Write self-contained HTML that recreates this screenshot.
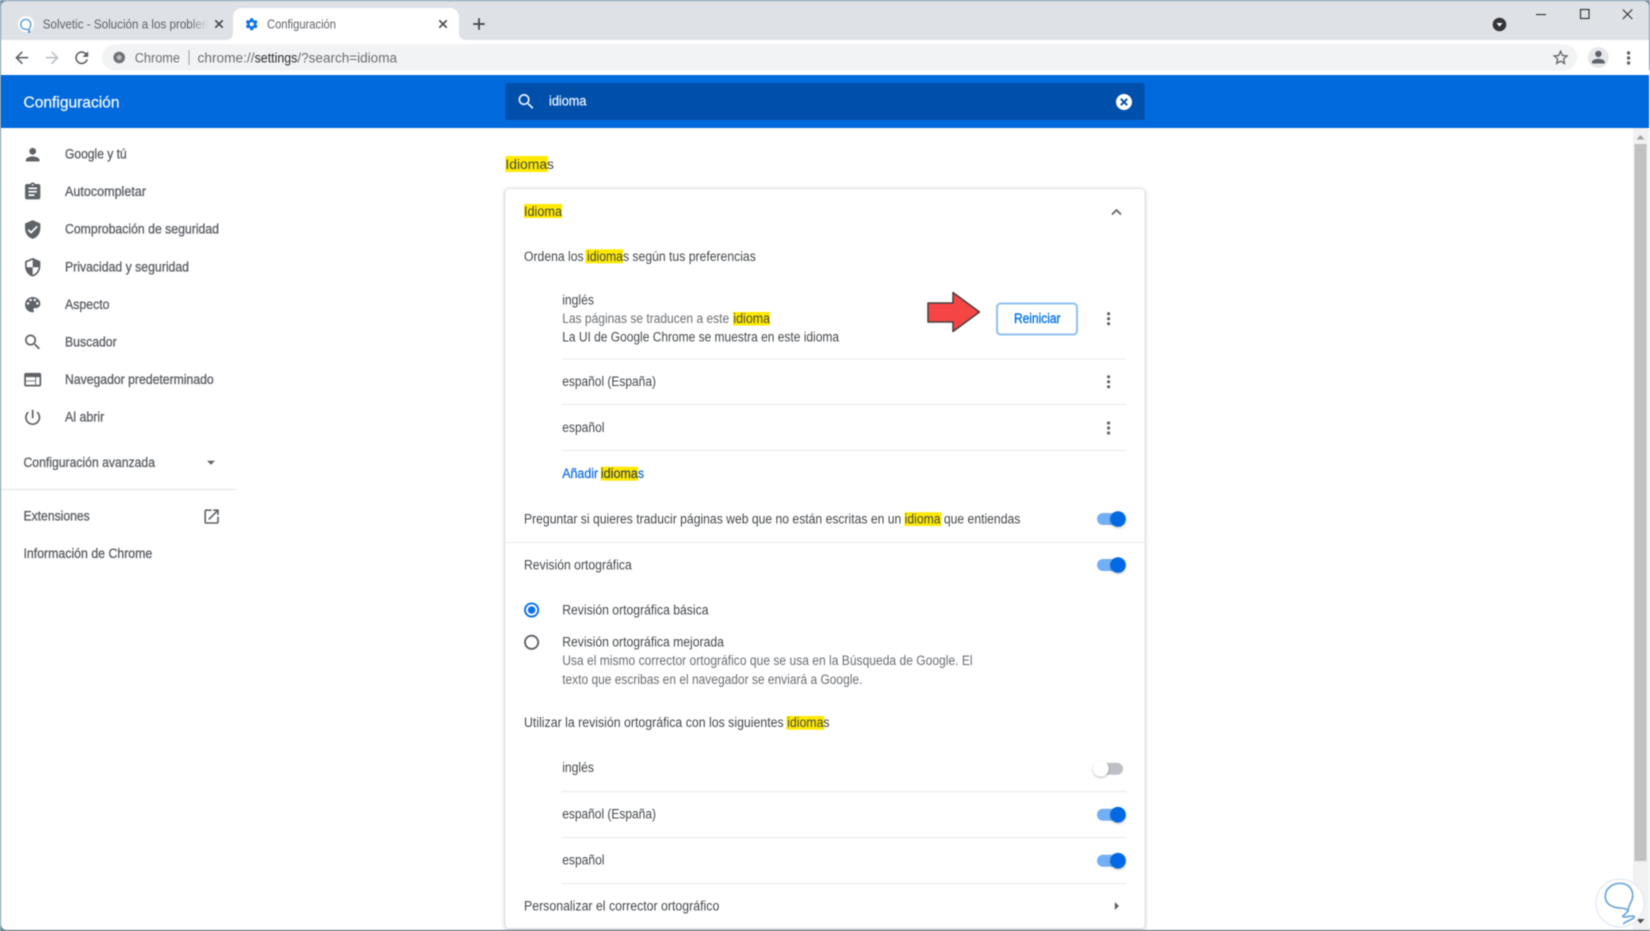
<!DOCTYPE html>
<html lang="es">
<head>
<meta charset="utf-8">
<title>Configuración</title>
<style>
html,body{margin:0;padding:0;background:#fff;width:1650px;height:931px;overflow:hidden}
svg{display:block;filter:blur(.42px)}
text{font-family:"Liberation Sans",sans-serif;font-size:13.5px;fill:#3c4043;white-space:pre}
.s{fill:#5f6368;stroke:#5f6368;stroke-width:.35px}
.g{fill:#6b6f74}
.d{fill:#45494d}
.tb{font-size:12.5px;fill:#5f6368}
.u{font-size:13.5px;fill:#6b6f74}
.i{fill:#5f6368}
.y{fill:#ffe900}
.ln{fill:#e8e9eb}
.tr{fill:#72b0f5}
.kn{fill:#0069e3}
</style>
</head>
<body>
<svg width="1650" height="931" viewBox="0 0 1650 931" xmlns="http://www.w3.org/2000/svg">
<defs>
<linearGradient id="fade" x1="0" x2="1" y1="0" y2="0"><stop offset="0" stop-color="#dee1e6" stop-opacity="0"/><stop offset="1" stop-color="#dee1e6"/></linearGradient>
<filter id="sh" x="-50%" y="-50%" width="200%" height="200%"><feDropShadow dx="0" dy="1" stdDeviation="1" flood-color="#000" flood-opacity=".3"/></filter>
<filter id="cs" x="-5%" y="-5%" width="110%" height="110%"><feDropShadow dx="0" dy="1" stdDeviation="1.5" flood-color="#3c4043" flood-opacity=".3"/></filter>
</defs>

<!-- window frame -->
<rect width="1650" height="931" fill="#6f93a8"/>
<rect x="1648" y="70" width="2" height="861" fill="#f2f4f5"/>
<rect x="1" y="1" width="1648" height="929" rx="6" fill="#fff"/>
<path d="M1 40V7a6 6 0 0 1 6-6h1636a6 6 0 0 1 6 6v33z" fill="#dee1e6"/>
<rect y="930" width="1650" height="1" fill="#3e5a70"/>

<!-- tabs -->
<path d="M225 40c6 0 8-3 8-8V17c0-5 4-9 9-9h208c5 0 9 4 9 9v15c0 5 2 8 8 8z" fill="#fff"/>
<circle cx="26" cy="24" r="8" fill="#fff"/>
<path d="M29 31c-.6-1.600-1.400-1.800-3.200-1.800-3 0-5-1.800-5-4.600 0-3 2.200-5.200 5-5.200 2.900 0 5 2.200 5 5 0 2.400-1.800 3.300-1.800 6.600z" fill="none" stroke="#5b9bd5" stroke-width="1.400"/>
<circle cx="29.200" cy="32" r="1" fill="#2f7fd0"/>
<text x="42.800" y="28.500" class="tb" textLength="181" lengthAdjust="spacingAndGlyphs">Solvetic - Solución a los problemas</text>
<rect x="190" y="12" width="18" height="24" fill="url(#fade)"/>
<rect x="208" y="12" width="20" height="24" fill="#dee1e6"/>
<path d="M215.300 20.300l7.400 7.400m0-7.400l-7.400 7.400" stroke="#45494d" stroke-width="1.700" fill="none"/>
<g transform="translate(244.500 17) scale(.6)"><path fill="#0b72e6" d="M19.430 12.980c.04-.32.07-.64.07-.98s-.03-.66-.07-.98l2.110-1.650c.19-.15.24-.42.12-.64l-2-3.460c-.12-.22-.39-.3-.61-.22l-2.490 1c-.52-.4-1.080-.73-1.690-.98l-.38-2.650C14.460 2.180 14.250 2 14 2h-4c-.25 0-.46.18-.49.42l-.38 2.650c-.61.25-1.170.59-1.690.98l-2.490-1c-.23-.09-.49 0-.61.22l-2 3.460c-.13.22-.07.49.12.64l2.110 1.650c-.04.32-.07.65-.07.98s.03.66.07.98l-2.110 1.650c-.19.15-.24.42-.12.64l2 3.460c.12.22.39.3.61.22l2.490-1c.52.4 1.080.73 1.690.98l.38 2.650c.03.24.24.42.49.42h4c.25 0 .46-.18.49-.42l.38-2.650c.61-.25 1.170-.59 1.690-.98l2.490 1c.23.09.49 0 .61-.22l2-3.460c.12-.22.07-.49-.12-.64l-2.110-1.650zM12 15.500c-1.930 0-3.500-1.570-3.500-3.500s1.570-3.500 3.500-3.500 3.500 1.570 3.500 3.500-1.570 3.500-3.500 3.500z"/></g>
<text x="267" y="28.500" class="tb" textLength="69" lengthAdjust="spacingAndGlyphs">Configuración</text>
<path d="M439.300 20.300l7.400 7.400m0-7.400l-7.400 7.400" stroke="#45494d" stroke-width="1.700" fill="none"/>
<path d="M479 18.200v11.600M473.200 24h11.600" stroke="#3c4043" stroke-width="1.700" fill="none"/>

<!-- window controls -->
<circle cx="1499.500" cy="24.500" r="6.800" fill="#35363a"/>
<path d="M1496.500 23h6l-3 3.600z" fill="#fff"/>
<rect x="1536" y="14" width="10" height="1.100" fill="#2b2b2b"/>
<rect x="1580.500" y="9.500" width="8.500" height="9" fill="none" stroke="#2b2b2b" stroke-width="1.100"/>
<path d="M1622.800 9.500l9.500 9.500m0-9.500l-9.500 9.500" stroke="#2b2b2b" stroke-width="1.050" fill="none"/>

<!-- toolbar -->
<rect x="1" y="40" width="1648" height="35" fill="#fff"/>
<g transform="translate(12 48) scale(.81)"><path fill="#5f6368" d="M20 11H7.830l5.590-5.590L12 4l-8 8 8 8 1.410-1.410L7.830 13H20v-2z"/></g>
<g transform="translate(42.500 48) scale(.81)"><path fill="#bdc1c6" d="M4 11h12.170l-5.590-5.590L12 4l8 8-8 8-1.410-1.410L16.170 13H4v-2z"/></g>
<g transform="translate(72 48) scale(.81)"><path fill="#5f6368" d="M17.650 6.350C16.200 4.900 14.350 4 12 4c-4.420 0-7.990 3.580-7.990 8s3.570 8 7.990 8c3.730 0 6.840-2.550 7.730-6h-2.080c-.82 2.330-3.040 4-5.650 4-3.310 0-6-2.690-6-6s2.690-6 6-6c1.660 0 3.140.69 4.220 1.780L13 11h7V4l-2.350 2.350z"/></g>
<rect x="102" y="44.300" width="1475" height="26.200" rx="13.100" fill="#f1f3f4"/>
<circle cx="119.200" cy="57.500" r="5.800" fill="#6f7378"/>
<circle cx="119.200" cy="57.500" r="2.500" fill="#b9bcc0"/>
<text x="134.700" y="62.300" class="u" textLength="45.300" lengthAdjust="spacingAndGlyphs">Chrome</text>
<rect x="188.500" y="50" width="1" height="15" fill="#9aa0a6"/>
<text x="197.500" y="62.300" class="u" textLength="57" lengthAdjust="spacingAndGlyphs">chrome://</text>
<text x="254.600" y="62.300" class="u" style="fill:#2a2c2f" textLength="42.800" lengthAdjust="spacingAndGlyphs">settings</text>
<text x="297.400" y="62.300" class="u" textLength="99.600" lengthAdjust="spacingAndGlyphs">/?search=idioma</text>
<g transform="translate(1551 48) scale(.8)"><path fill="#5f6368" d="M22 9.240l-7.190-.62L12 2 9.190 8.630 2 9.240l5.460 4.730L5.820 21 12 17.270 18.180 21l-1.630-7.030L22 9.240zM12 15.400l-3.760 2.270 1-4.280-3.320-2.880 4.380-.38L12 6.100l1.710 4.040 4.380.38-3.320 2.880 1 4.280L12 15.400z"/></g>
<circle cx="1598.300" cy="57.500" r="10.500" fill="#e6e8eb"/>
<g transform="translate(1588.800 47.500) scale(.8)"><path fill="#5f6368" d="M12 12c2.210 0 4-1.790 4-4s-1.790-4-4-4-4 1.790-4 4 1.790 4 4 4zm0 2c-2.670 0-8 1.340-8 4v2h16v-2c0-2.660-5.330-4-8-4z"/></g>
<circle cx="1628.600" cy="53" r="1.700" fill="#5f6368"/><circle cx="1628.600" cy="58" r="1.700" fill="#5f6368"/><circle cx="1628.600" cy="63" r="1.700" fill="#5f6368"/>

<!-- blue header -->
<rect x="1" y="75" width="1648" height="53" fill="#0069dc"/>
<text x="23.500" y="107.600" style="font-size:15.500px;fill:#f0f6fe;stroke:#f0f6fe;stroke-width:.25px" textLength="96" lengthAdjust="spacingAndGlyphs">Configuración</text>
<rect x="505.500" y="83" width="639" height="37" rx="2" fill="#0050ab"/>
<g transform="translate(516 91.500) scale(.85)"><path fill="#e8f0fe" d="M15.500 14h-.79l-.28-.27C15.410 12.590 16 11.110 16 9.500 16 5.910 13.090 3 9.500 3S3 5.910 3 9.500 5.910 16 9.500 16c1.610 0 3.090-.59 4.230-1.570l.27.28v.79l5 4.990L20.490 19l-4.990-5zm-6 0C7.010 14 5 11.990 5 9.500S7.010 5 9.500 5 14 7.010 14 9.500 11.990 14 9.500 14z"/></g>
<text x="549" y="105.600" style="fill:#f0f6fe;stroke:#f0f6fe;stroke-width:.2px" textLength="37.500" lengthAdjust="spacingAndGlyphs">idioma</text>
<circle cx="1124" cy="102" r="8" fill="#fff"/>
<path d="M1120.800 98.800l6.400 6.400m0-6.400l-6.400 6.400" stroke="#0050ab" stroke-width="1.900" fill="none"/>

<!-- sidebar -->
<g transform="translate(22.500 144.500) scale(.85)"><path class="i" d="M12 12c2.210 0 4-1.790 4-4s-1.790-4-4-4-4 1.790-4 4 1.790 4 4 4zm0 2c-2.670 0-8 1.340-8 4v2h16v-2c0-2.660-5.330-4-8-4z"/></g>
<text x="65" y="158.300" class="s" textLength="61.700" lengthAdjust="spacingAndGlyphs">Google y tú</text>
<g transform="translate(22.500 181.500) scale(.85)"><path class="i" d="M19 3h-4.180C14.400 1.840 13.300 1 12 1c-1.300 0-2.400.84-2.820 2H5c-1.100 0-2 .9-2 2v14c0 1.100.9 2 2 2h14c1.100 0 2-.9 2-2V5c0-1.100-.9-2-2-2zm-7 0c.55 0 1 .45 1 1s-.45 1-1 1-1-.45-1-1 .45-1 1-1zm2 14H7v-2h7v2zm3-4H7v-2h10v2zm0-4H7V7h10v2z"/></g>
<text x="65" y="196" class="s" textLength="81" lengthAdjust="spacingAndGlyphs">Autocompletar</text>
<g transform="translate(22.500 219.300) scale(.85)"><path class="i" d="M12 1L3 5v6c0 5.550 3.840 10.740 9 12 5.160-1.260 9-6.450 9-12V5l-9-4zm-2 16l-4-4 1.410-1.410L10 14.170l6.590-6.590L18 9l-8 8z"/></g>
<text x="65" y="233.500" class="s" textLength="154" lengthAdjust="spacingAndGlyphs">Comprobación de seguridad</text>
<g transform="translate(22.500 257) scale(.85)"><path class="i" d="M12 1L3 5v6c0 5.550 3.840 10.740 9 12 5.160-1.260 9-6.450 9-12V5l-9-4zm0 10.990h7c-.53 4.120-3.280 7.790-7 8.940V12H5V6.300l7-3.110v8.800z"/></g>
<text x="65" y="271.300" class="s" textLength="124" lengthAdjust="spacingAndGlyphs">Privacidad y seguridad</text>
<g transform="translate(22.500 294.500) scale(.85)"><path class="i" d="M12 3c-4.970 0-9 4.030-9 9s4.030 9 9 9c.83 0 1.500-.67 1.500-1.500 0-.39-.15-.74-.39-1.010-.23-.26-.38-.61-.38-.99 0-.83.67-1.500 1.500-1.500H16c2.760 0 5-2.240 5-5 0-4.420-4.030-8-9-8zm-5.500 9c-.83 0-1.500-.67-1.500-1.500S5.670 9 6.500 9 8 9.670 8 10.500 7.330 12 6.500 12zm3-4C8.670 8 8 7.330 8 6.500S8.670 5 9.500 5s1.500.67 1.500 1.500S10.330 8 9.500 8zm5 0c-.83 0-1.500-.67-1.500-1.500S13.670 5 14.500 5s1.500.67 1.500 1.500S15.330 8 14.500 8zm3 4c-.83 0-1.500-.67-1.500-1.500S16.670 9 17.500 9s1.500.67 1.500 1.500-.67 1.500-1.500 1.500z"/></g>
<text x="65" y="309" class="s" textLength="44.500" lengthAdjust="spacingAndGlyphs">Aspecto</text>
<g transform="translate(22.500 332) scale(.85)"><path class="i" d="M15.500 14h-.79l-.28-.27C15.410 12.590 16 11.110 16 9.500 16 5.910 13.090 3 9.500 3S3 5.910 3 9.500 5.910 16 9.500 16c1.610 0 3.090-.59 4.230-1.570l.27.28v.79l5 4.990L20.490 19l-4.990-5zm-6 0C7.010 14 5 11.990 5 9.500S7.010 5 9.500 5 14 7.010 14 9.500 11.990 14 9.500 14z"/></g>
<text x="65" y="346.500" class="s" textLength="51.700" lengthAdjust="spacingAndGlyphs">Buscador</text>
<g transform="translate(22.500 369.500) scale(.85)"><path class="i" d="M20 4H4c-1.100 0-1.990.9-1.990 2L2 18c0 1.100.9 2 2 2h16c1.100 0 2-.9 2-2V6c0-1.100-.9-2-2-2zm-5 14H4v-4h11v4zm0-5H4V9h11v4zm5 5h-4V9h4v9z"/></g>
<text x="65" y="384.200" class="s" textLength="148.700" lengthAdjust="spacingAndGlyphs">Navegador predeterminado</text>
<g transform="translate(22.500 407.200) scale(.85)"><path class="i" d="M13 3h-2v10h2V3zm4.830 2.170l-1.420 1.420C17.990 7.860 19 9.810 19 12c0 3.870-3.130 7-7 7s-7-3.130-7-7c0-2.190 1.010-4.140 2.580-5.420L6.170 5.170C4.230 6.820 3 9.260 3 12c0 4.970 4.030 9 9 9s9-4.030 9-9c0-2.740-1.230-5.180-3.170-6.830z"/></g>
<text x="65" y="421.700" class="s" textLength="39.300" lengthAdjust="spacingAndGlyphs">Al abrir</text>
<text x="23.500" y="467.200" class="s" textLength="131.500" lengthAdjust="spacingAndGlyphs">Configuración avanzada</text>
<path d="M207 460.800h8l-4 4z" fill="#5f6368"/>
<rect x="1" y="489" width="235" height="1" fill="#e0e2e4"/>
<text x="23.500" y="520.500" class="s" textLength="66.200" lengthAdjust="spacingAndGlyphs">Extensiones</text>
<g transform="translate(202 507) scale(.8)"><path class="i" d="M19 19H5V5h7V3H5c-1.110 0-2 .9-2 2v14c0 1.100.89 2 2 2h14c1.100 0 2-.9 2-2v-7h-2v7zM14 3v2h3.590l-9.830 9.830 1.410 1.410L19 6.410V10h2V3h-7z"/></g>
<text x="23.500" y="558.200" class="s" textLength="128.800" lengthAdjust="spacingAndGlyphs">Información de Chrome</text>

<!-- section title -->
<rect x="505.400" y="156" width="42.600" height="16" class="y"/>
<text x="505.400" y="168.800" class="d" textLength="48.600" lengthAdjust="spacingAndGlyphs">Idiomas</text>

<!-- card -->
<rect x="505" y="188.500" width="640" height="740" rx="4" fill="#fff" stroke="#e2e3e5" filter="url(#cs)"/>
<rect x="524" y="204" width="38" height="14" class="y"/>
<text x="524" y="216" class="d" textLength="38" lengthAdjust="spacingAndGlyphs">Idioma</text>
<path d="M1112 214.500l4.500-4.500 4.500 4.500" stroke="#5f6368" stroke-width="1.700" fill="none"/>

<rect x="585.400" y="249.300" width="37.600" height="14" class="y"/>
<text x="524" y="261" class="d" textLength="231.800" lengthAdjust="spacingAndGlyphs">Ordena los idiomas según tus preferencias</text>

<text x="562.200" y="304.300" class="d" textLength="31.800" lengthAdjust="spacingAndGlyphs">inglés</text>
<rect x="733" y="312" width="37" height="13.500" class="y"/>
<text x="562.200" y="323" class="g" textLength="167" lengthAdjust="spacingAndGlyphs">Las páginas se traducen a este</text>
<text x="733.400" y="323" class="d" textLength="36.600" lengthAdjust="spacingAndGlyphs">idioma</text>
<text x="562.200" y="341.600" class="d" textLength="276.800" lengthAdjust="spacingAndGlyphs">La UI de Google Chrome se muestra en este idioma</text>
<rect x="562" y="358.500" width="564" height="1" class="ln"/>

<path d="M928 303h25v-10.500l26.500 19.500-26.500 19.500V322h-25z" fill="#f64545" stroke="#45403f" stroke-width="1.500" stroke-linejoin="round"/>

<rect x="997" y="303.500" width="80" height="31" rx="3.500" fill="#fff" stroke="#8fc0f5" stroke-width="2"/>
<text x="1014" y="323.200" style="fill:#0b78e6;stroke:#0b78e6;stroke-width:.4px" textLength="46.500" lengthAdjust="spacingAndGlyphs">Reiniciar</text>

<g fill="#5f6368">
<circle cx="1108.600" cy="313.700" r="1.600"/><circle cx="1108.600" cy="318.700" r="1.600"/><circle cx="1108.600" cy="323.700" r="1.600"/>
<circle cx="1108.600" cy="376.800" r="1.600"/><circle cx="1108.600" cy="381.800" r="1.600"/><circle cx="1108.600" cy="386.800" r="1.600"/>
<circle cx="1108.600" cy="423" r="1.600"/><circle cx="1108.600" cy="428" r="1.600"/><circle cx="1108.600" cy="433" r="1.600"/>
</g>

<text x="562.200" y="386.200" class="d" textLength="93.800" lengthAdjust="spacingAndGlyphs">español (España)</text>
<rect x="562" y="404" width="564" height="1" class="ln"/>
<text x="562.200" y="432.200" class="d" textLength="42.300" lengthAdjust="spacingAndGlyphs">español</text>
<rect x="562" y="450" width="564" height="1" class="ln"/>

<rect x="600.700" y="466.700" width="37.300" height="14" class="y"/>
<text x="562.200" y="478.200" style="fill:#1a73e0;stroke:#1a73e0;stroke-width:.3px" textLength="36" lengthAdjust="spacingAndGlyphs">Añadir</text>
<text x="600.900" y="478.200" class="d" style="stroke:#45494d;stroke-width:.25px" textLength="37" lengthAdjust="spacingAndGlyphs">idioma</text>
<text x="638" y="478.200" style="fill:#1a73e0;stroke:#1a73e0;stroke-width:.3px" textLength="6" lengthAdjust="spacingAndGlyphs">s</text>

<rect x="904.600" y="512.300" width="36.900" height="13.700" class="y"/>
<text x="524" y="523.500" class="d" textLength="496.300" lengthAdjust="spacingAndGlyphs">Preguntar si quieres traducir páginas web que no están escritas en un idioma que entiendas</text>

<rect x="1097" y="513" width="28" height="12" rx="6" class="tr"/>
<circle cx="1118" cy="519" r="7.800" class="kn" filter="url(#sh)"/>
<rect x="506" y="542" width="639" height="1" class="ln"/>

<text x="524" y="569.500" class="d" textLength="107.800" lengthAdjust="spacingAndGlyphs">Revisión ortográfica</text>
<rect x="1097" y="559" width="28" height="12" rx="6" class="tr"/>
<circle cx="1118" cy="565" r="7.800" class="kn" filter="url(#sh)"/>

<circle cx="531.600" cy="610" r="6.600" fill="none" stroke="#0a72ea" stroke-width="1.900"/>
<circle cx="531.600" cy="610" r="3.800" fill="#0a72ea"/>
<text x="562.200" y="614.400" class="d" textLength="146.300" lengthAdjust="spacingAndGlyphs">Revisión ortográfica básica</text>
<circle cx="531.600" cy="642.300" r="6.600" fill="none" stroke="#5f6368" stroke-width="1.900"/>
<text x="562.200" y="646.400" class="d" textLength="161.700" lengthAdjust="spacingAndGlyphs">Revisión ortográfica mejorada</text>
<text x="562.200" y="665" class="g" textLength="410.400" lengthAdjust="spacingAndGlyphs">Usa el mismo corrector ortográfico que se usa en la Búsqueda de Google. El</text>
<text x="562.200" y="683.800" class="g" textLength="300.200" lengthAdjust="spacingAndGlyphs">texto que escribas en el navegador se enviará a Google.</text>

<rect x="786.500" y="716" width="37.700" height="13.700" class="y"/>
<text x="524" y="727" class="d" textLength="305.600" lengthAdjust="spacingAndGlyphs">Utilizar la revisión ortográfica con los siguientes idiomas</text>

<text x="562.200" y="772.200" class="d" textLength="31.800" lengthAdjust="spacingAndGlyphs">inglés</text>
<rect x="1097" y="762.700" width="26" height="12" rx="6" fill="#bdc1c6"/>
<circle cx="1100.800" cy="768.700" r="7.800" fill="#fff" filter="url(#sh)"/>
<rect x="562" y="791" width="564" height="1" class="ln"/>

<text x="562.200" y="818.400" class="d" textLength="93.800" lengthAdjust="spacingAndGlyphs">español (España)</text>
<rect x="1097" y="808.700" width="28" height="12" rx="6" class="tr"/>
<circle cx="1118" cy="814.700" r="7.800" class="kn" filter="url(#sh)"/>
<rect x="562" y="837" width="564" height="1" class="ln"/>

<text x="562.200" y="864.400" class="d" textLength="42.300" lengthAdjust="spacingAndGlyphs">español</text>
<rect x="1097" y="854.700" width="28" height="12" rx="6" class="tr"/>
<circle cx="1118" cy="860.700" r="7.800" class="kn" filter="url(#sh)"/>
<rect x="562" y="883" width="564" height="1" class="ln"/>

<text x="524" y="910.400" class="d" textLength="195.300" lengthAdjust="spacingAndGlyphs">Personalizar el corrector ortográfico</text>
<path d="M1114.800 902l4.200 4-4.200 4z" fill="#5f6368"/>

<!-- scrollbar -->
<rect x="1633" y="128" width="15.500" height="802" fill="#f1f1f1"/>
<path d="M1636.500 139.500h8l-4-4.500z" fill="#a3a3a3"/>
<rect x="1634.500" y="144" width="12" height="717" fill="#c1c1c1"/>
<path d="M1636.500 919h8l-4 4.500z" fill="#505050"/>

<!-- watermark -->
<circle cx="1620" cy="903" r="24" fill="#fff" fill-opacity=".96" stroke="#dfe9f4" stroke-width="1.200"/>
<g transform="translate(1480 780) scale(.3333)" fill="none" stroke="#6aa5dc" stroke-width="5" stroke-linecap="round" stroke-linejoin="round">
<path d="M444 394C440 385 432 385 418 384C393 382 376 370 376 349C376 325 398 310 420 310C445 310 460 328 458 350C457 366 445 372 444 394Z"/>
<path d="M444 394L428 409C432 416 465 402 463 411C461 419 438 422 431 431"/>
</g>
</svg>
</body>
</html>
